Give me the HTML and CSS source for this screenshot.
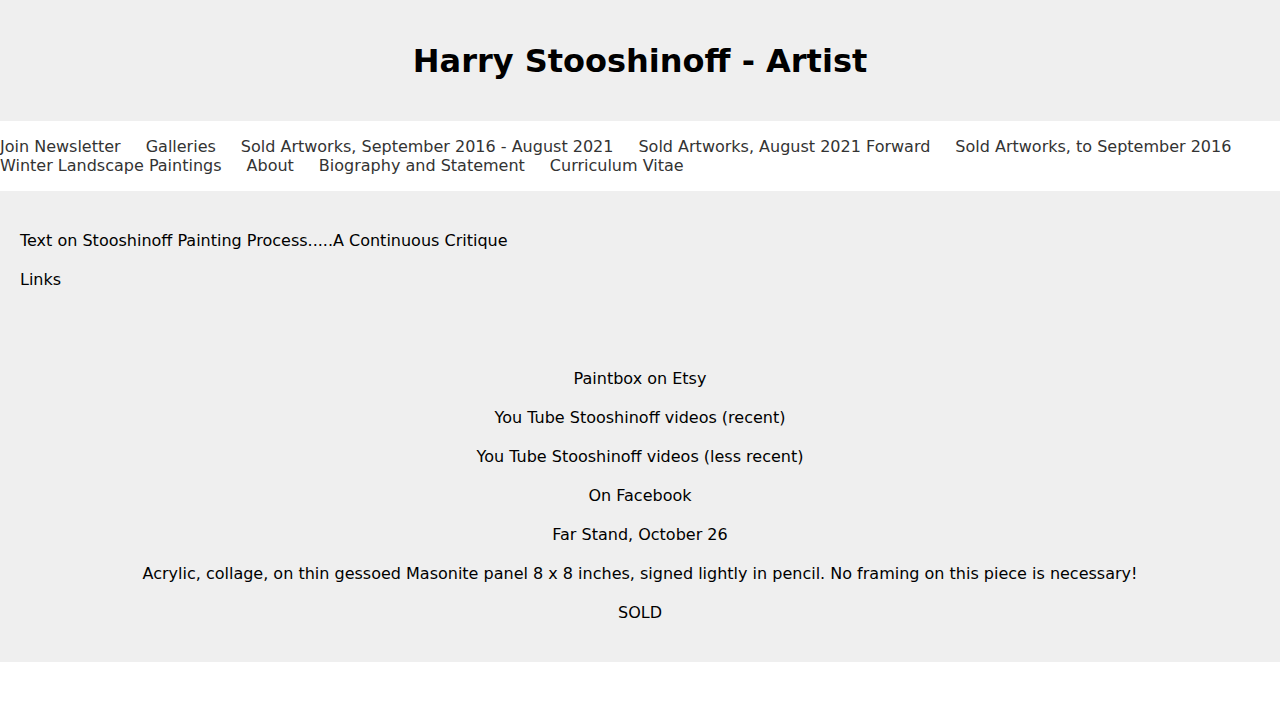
FILE: index.html
```html
<!DOCTYPE html>
<html lang="en">
<head>
<meta charset="utf-8">
<title>Harry Stooshinoff - Artist</title>
<link rel="stylesheet" href="styles.css">
</head>
<body>
<header class="site-header">
  <h1 class="site-title">Harry Stooshinoff - Artist</h1>
</header>
<nav class="site-nav">
  <a href="#">Join Newsletter</a>
  <a href="#">Galleries</a>
  <a href="#">Sold Artworks, September 2016 - August 2021</a>
  <a href="#">Sold Artworks, August 2021 Forward</a>
  <a href="#">Sold Artworks, to September 2016</a>
  <a href="#">Winter Landscape Paintings</a>
  <a href="#">About</a>
  <a href="#">Biography and Statement</a>
  <a href="#">Curriculum Vitae</a>
</nav>
<main class="content">
  <p>Text on Stooshinoff Painting Process.....A Continuous Critique</p>
  <p>Links</p>
  <div class="spacer"></div>
  <div class="centered">
    <p>Paintbox on Etsy</p>
    <p>You Tube Stooshinoff videos (recent)</p>
    <p>You Tube Stooshinoff videos (less recent)</p>
    <p>On Facebook</p>
    <p>Far Stand, October 26</p>
    <p>Acrylic, collage, on thin gessoed Masonite panel 8 x 8 inches, signed lightly in pencil. No framing on this piece is necessary!</p>
    <p>SOLD</p>
  </div>
</main>
</body>
</html>
```
FILE: styles.css
```css
html, body {
  margin: 0;
  padding: 0;
  background: #ffffff;
  font-family: "DejaVu Sans", sans-serif;
  font-size: 16px;
  color: #000;
}
.site-header {
  background: #efefef;
  padding: 43px 0 41px;
  text-align: center;
}
.site-title {
  margin: 0;
  font-size: 32px;
  font-weight: bold;
  line-height: 37px;
}
.site-nav {
  background: #fff;
  padding: 16px 0 16px;
  line-height: 19px;
  display: flex;
  flex-wrap: wrap;
  column-gap: 25px;
}
.site-nav a {
  color: #333;
  text-decoration: none;
}
.content {
  background: #efefef;
  padding: 22px 20px 22px;
}
.content p {
  margin: 16px 0;
  line-height: 23px;
}
.spacer {
  height: 44px;
}
.centered {
  text-align: center;
}
```
